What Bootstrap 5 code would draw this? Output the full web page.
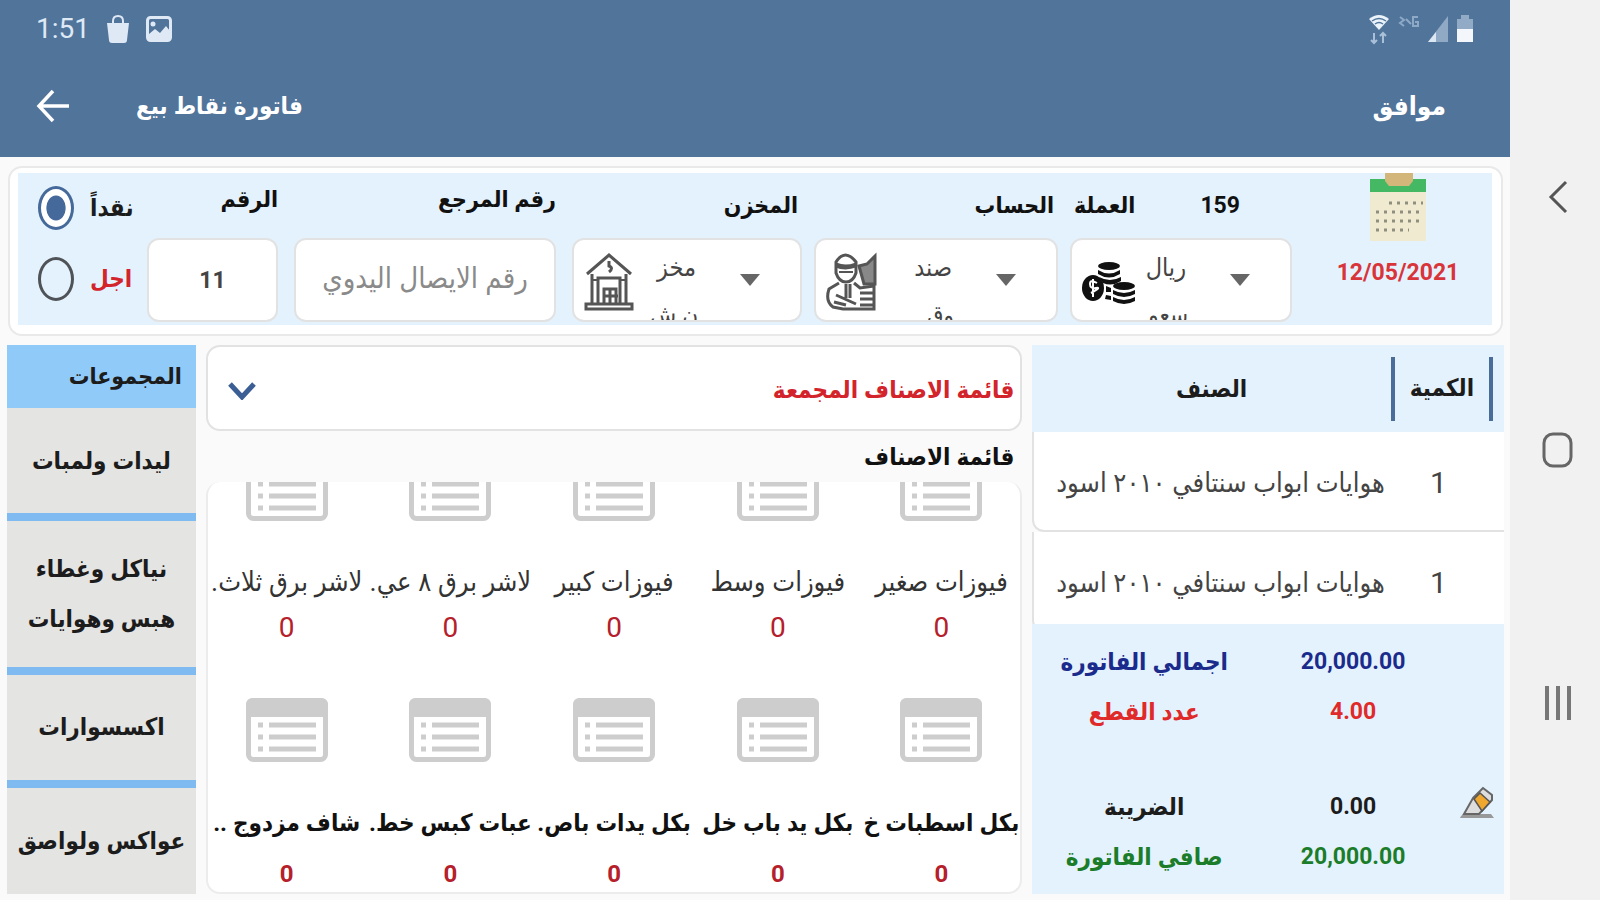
<!DOCTYPE html>
<html lang="ar">
<head>
<meta charset="utf-8">
<meta name="viewport" content="width=device-width, initial-scale=1">
<title>فاتورة نقاط بيع</title>
<link href="https://cdn.jsdelivr.net/npm/bootstrap@5.3.0/dist/css/bootstrap.min.css" rel="stylesheet">
<script src="https://cdn.jsdelivr.net/npm/bootstrap@5.3.0/dist/js/bootstrap.bundle.min.js"></script>
<style>
  :root { --bar:#51749b; --sky:#e3f2fd; --line:#e2e2e2; --ink:#1c1c1c; }
  body { font-family:Roboto,"DejaVu Sans Condensed","DejaVu Sans",sans-serif; font-size:24px; line-height:32px; color:var(--ink); background:#fafafa; }
  svg { display:block; flex:none; }
  .system-nav { width:90px; background:#f1f1f1; padding:180px 0 180px 6px; }
  .topbar { background:var(--bar); color:#fff; height:157px; flex:none; }
  .status { height:57px; padding:0 36px; color:#dfe9f5; }
  .clock { font-size:28px; }
  .actions { height:98px; padding:0 64px 0 36px; font-size:26px; }
  .plain { background:none; border:0; padding:0; color:inherit; }
  .title { font-size:24px; margin-left:66px; }
  .filters { margin:9px 7px 0 8px; border:2px solid #e9e9e9; border-radius:14px; background:#fff; padding:5px 9px 9px 8px; }
  .filter-grid { display:grid; grid-template-columns:117fr 131fr 266fr 234fr 244fr 222fr 188fr; column-gap:12px; background:var(--sky); height:152px; }
  .filter-grid > div { min-width:0; }
  .pay-list { padding:13px 0 0 20px; gap:27px; }
  .pay-due { color:#d3232b; }
  .cap { height:65px; font-weight:700; font-size:23px; color:#111; padding-bottom:12px; }
  .cap-low { padding-bottom:0; }
  .box { height:84px; border:2px solid var(--line); border-radius:12px; background:#fff; width:100%; color:#444; }
  .box::placeholder { color:#8a8a8a; opacity:1; font-size:29px; }
  .pick { position:relative; }
  .pick select { appearance:none; padding:0 104px 24px 0; text-align:right; direction:rtl; font-size:25px; }
  .pick .pic { position:absolute; left:12px; top:14px; pointer-events:none; }
  .pick .tri { position:absolute; right:42px; top:36px; pointer-events:none; }
  .pick .rest { position:absolute; right:104px; bottom:2px; height:18px; line-height:26px; overflow:hidden; pointer-events:none; color:#444; }
  input[type=radio] { appearance:none; width:36px; height:44px; border:3px solid #4f5357; border-radius:50%; margin:0; flex:none; }
  input[type=radio]:checked { border-color:#44699a; background:radial-gradient(ellipse 10px 13px,#44699a 92%,#fff 100%); }
  .work { display:grid; grid-template-columns:189fr 817fr 472fr; margin:9px 6px 6px 7px; min-height:0; column-gap:10px; }
  .group-head { height:63px; flex:none; background:#90caf9; padding-right:14px; font-size:23px; }
  .group-item { background:#e4e4e3; border:0; border-bottom:8px solid #7fbaf0; line-height:50px; font-size:24px; font-weight:700; color:var(--ink); width:100%; padding:0; }
  .combo { height:86px; flex:none; border:2px solid var(--line); border-radius:14px; background:#fff; padding:4px 6px 0 20px; color:#d3232b; font-weight:700; font-size:24px; width:100%; }
  .list-cap { height:51px; flex:none; padding-right:8px; padding-top:2px; font-size:24px; color:#111; }
  .goods { border:2px solid #ececec; border-top:0; border-radius:14px; background:#fff; overflow:hidden; min-height:0; }
  .goods-grid { display:grid; grid-template-columns:repeat(5,1fr); direction:rtl; margin:0 -3px; }
  .good { height:241px; min-width:0; display:flex; flex-direction:column; align-items:center; }
  .good .nm { margin-top:39px; width:100%; text-align:center; white-space:nowrap; overflow:hidden; height:44px; line-height:44px; color:#333; font-size:27px; }
  .good .zero { color:#b5202b; font-size:28px; margin-top:8px; }
  .good-b { height:194px; }
  .good-b .nm { font-weight:700; color:#111; font-size:24px; }
  .good-b .zero { font-weight:700; font-size:24px; margin-top:13px; }
  .lines { width:100%; direction:rtl; border-collapse:separate; border-spacing:0; table-layout:fixed; }
  .lines th { background:var(--sky); height:87px; text-align:center; font-size:24px; }
  .lines td { background:#fff; height:100px; border-bottom:2px solid var(--line); text-align:center; color:#444; padding:4px 0 0; white-space:nowrap; }
  .lines td:last-child { border-left:2px solid var(--line); border-radius:0 0 0 12px; text-align:right; font-size:27px; padding-right:6px; }
  .lines td:first-child { font-size:30px; padding-right:18px; }
  .q { display:block; margin:0 11px 0 0; border:solid #4a6c98; border-width:0 4px; height:64px; line-height:62px; }
  .lines-wrap { height:279px; flex:none; overflow:hidden; }
  .sums { background:var(--sky); font-weight:700; font-size:24px; padding-top:2px; }
  .sums dl { display:grid; grid-template-columns:224fr 194fr 54fr; text-align:center; align-items:center; margin:0; }
  .sums dd { margin:0; font-size:23px; }
  .num { font-family:Roboto,sans-serif; font-size:23px; }
</style>
</head>
<body>
<svg width="0" height="0" class="position-absolute" aria-hidden="true">
  <symbol id="card-icon" viewBox="0 0 82 64">
    <rect x="2.500" y="2.500" width="77" height="59" rx="5" fill="#fff" stroke="#cdcdcd" stroke-width="5"/>
    <path d="M0 19V7q0-7 7-7h68q7 0 7 7v12z" fill="#cdcdcd"/>
    <path d="M12 27h5M12 39h5M12 51h5M23 27h47M23 39h47M23 51h47" stroke="#cdcdcd" stroke-width="5"/>
  </symbol>
</svg>
<div class="d-flex vh-100 overflow-hidden">
  <div class="d-flex flex-column flex-grow-1 overflow-hidden">
    <header class="topbar">
      <div class="status d-flex align-items-center justify-content-between">
        <div class="d-flex align-items-center">
          <span class="clock">1:51</span>
          <svg class="ms-3" width="24" height="28" viewBox="0 0 24 28"><path d="M1 8h22l-2 17q0 3-3 3H6q-3 0-3-3z" fill="#dfe9f5"/><path d="M7 10V6q0-5 5-5t5 5v4" fill="none" stroke="#dfe9f5" stroke-width="2"/></svg>
          <svg class="ms-3" width="26" height="26" viewBox="0 0 26 26"><rect x="1.500" y="1.500" width="23" height="23" rx="3" fill="none" stroke="#dfe9f5" stroke-width="3"/><path d="M3 23V18l6-5 5 4 6-7 4 5v8z" fill="#dfe9f5"/><circle cx="7" cy="8" r="2.500" fill="#dfe9f5"/></svg>
        </div>
        <div class="d-flex align-items-center">
          <svg width="22" height="32" viewBox="0 0 22 32"><path d="M1 6q10-8 20 0L11 17z" fill="#eaf2fa"/><path d="M4 8q7-5 14 0M7 11q4-3 8 0" fill="none" stroke="#51749b" stroke-width="1.500"/><path d="M6 20v10M3 27l3 3 3-3M15 30V20M12 23l3-3 3 3" stroke="#a9c0d8" stroke-width="2" fill="none"/></svg>
          <svg class="ms-2" width="22" height="30" viewBox="0 0 22 30"><path d="M2 3l4 3-4 3 4 3M20 3h-5v9h5V8h-3M8 5l5 5" stroke="#8da9c6" stroke-width="2" fill="none"/></svg>
          <svg class="ms-2" width="20" height="26" viewBox="0 0 20 26"><path d="M0 26L20 0v26z" fill="#90aac5"/><path d="M0 26l8-10v10z" fill="#dbe7f3"/></svg>
          <svg class="ms-2" width="18" height="28" viewBox="0 0 18 28"><path d="M1 4h4V0h8v4h4v11H1z" fill="#91abc7"/><path d="M1 14h16v13H1z" fill="#f3f7fb"/></svg>
        </div>
      </div>
      <div class="actions d-flex align-items-center">
        <button class="plain" aria-label="رجوع"><svg width="34" height="34" viewBox="0 0 34 34"><path d="M17 2L3 17l14 15M4 17h29" fill="none" stroke="#fff" stroke-width="3.500"/></svg></button>
        <h1 class="title fw-bold mb-0" dir="rtl">فاتورة نقاط بيع</h1>
        <button class="plain fw-bold ms-auto" dir="rtl">موافق</button>
      </div>
    </header>

    <form class="filters">
      <div class="filter-grid">
        <div class="pay-list d-flex flex-column">
          <label class="d-flex align-items-center gap-3 fw-bold"><input type="radio" name="pay" checked><span dir="rtl">نقداً</span></label>
          <label class="pay-due d-flex align-items-center gap-3 fw-bold"><input type="radio" name="pay"><span dir="rtl">اجل</span></label>
        </div>
        <div>
          <label class="cap d-flex align-items-center justify-content-end" for="no">الرقم</label>
          <input id="no" class="box num text-center fw-bold" value="11">
        </div>
        <div class="ps-1">
          <label class="cap d-flex align-items-center justify-content-end" for="ref">رقم المرجع</label>
          <input id="ref" class="box text-center" dir="rtl" placeholder="رقم الايصال اليدوي">
        </div>
        <div class="ps-1">
          <label class="cap cap-low d-flex align-items-center justify-content-end pe-1" for="store">المخزن</label>
          <div class="pick"><select id="store" class="box"><option>مخز</option></select><span class="rest" dir="rtl">ن ش</span>
            <svg class="pic" width="50" height="60" viewBox="0 0 50 60" fill="none" stroke="#555" stroke-width="3"><path d="M3 22L25 3l22 19M8 22v30M42 22v30M14 52V26h22v26M25 9v5q5 2 0 6M20 51V37h12v14M20 44h14M26 37v14"/><path d="M2 52h46v5H2z"/><path d="M8 28h6M36 28h6" stroke-width="2"/></svg>
            <svg class="tri" width="20" height="12" viewBox="0 0 20 12"><path d="M0 0h20L10 12z" fill="#666"/></svg></div>
        </div>
        <div>
          <label class="cap cap-low d-flex align-items-center justify-content-end pe-1" for="acc">الحساب</label>
          <div class="pick"><select id="acc" class="box"><option>صند</option></select><span class="rest" dir="rtl">وق</span>
            <svg class="pic" width="52" height="60" viewBox="0 0 52 60" fill="none" stroke="#555" stroke-width="3"><path d="M10 21V10q9-14 20 0v11q-3 9-10 9t-10-9z"/><path d="M10 13q9 4 20 0" stroke-width="5"/><path d="M13 20h14" stroke-width="2"/><path d="M13 31L3 37q-4 12 4 18l10 2h31V34l-14 2-6-5"/><path d="M33 14l8-2 8-8v28H38z" fill="#888"/><path d="M20 32v14M24 32v14M10 43l20 9M8 50l12 3M34 41h14M34 47h14M34 53h14"/></svg>
            <svg class="tri" width="20" height="12" viewBox="0 0 20 12"><path d="M0 0h20L10 12z" fill="#666"/></svg></div>
        </div>
        <div>
          <div class="cap cap-low d-flex align-items-center justify-content-between ps-1"><label for="cur">العملة</label><span class="num me-5 pe-1">159</span></div>
          <div class="pick"><select id="cur" class="box"><option>ريال</option></select><span class="rest" dir="rtl">سعو</span>
            <svg class="pic" width="54" height="60" viewBox="0 0 54 60"><g fill="#111"><ellipse cx="27" cy="14" rx="11" ry="4"/><path d="M16 18q11 7 22 0v4q-11 7-22 0zM17 25q11 6 22 0v4q-9 6-18 2z"/><ellipse cx="42" cy="34" rx="11" ry="4"/><path d="M31 38q11 6 22 0v4q-11 6-22 0zM31 45q11 6 22 0v4q-11 6-22 0zM24 34l5 2v4h-5zM24 43l5 1v4l-6-1z"/><ellipse cx="11" cy="36" rx="11" ry="13"/></g><path d="M15 31q-7-4-7 1t6 4-5 5M11 27v18" stroke="#fff" stroke-width="2" fill="none"/></svg>
            <svg class="tri" width="20" height="12" viewBox="0 0 20 12"><path d="M0 0h20L10 12z" fill="#666"/></svg></div>
        </div>
        <div class="d-flex flex-column align-items-center">
          <svg width="58" height="68" viewBox="0 0 58 68"><path d="M1 6h56v62H1z" fill="#efead0"/><path d="M1 6h56v13H1z" fill="#45b864"/><path d="M16 0h28v8l-4 5H20l-4-5z" fill="#d3b77a"/><g stroke="#8f8f80" stroke-width="3" stroke-dasharray="3 5"><path d="M20 30h34M7 39h47M7 48h47M7 57h33"/></g></svg>
          <span class="num fw-bold pt-3" style="color:#d8343a">12/05/2021</span>
        </div>
      </div>
    </form>

    <main class="work flex-grow-1">
      <nav class="d-flex flex-column overflow-hidden" dir="rtl">
        <h2 class="group-head d-flex align-items-center fw-bold mb-0">المجموعات</h2>
        <button class="group-item" style="flex:105 0 0">ليدات ولمبات</button>
        <button class="group-item" style="flex:145 0 0">نياكل وغطاء<br>هبس وهوايات</button>
        <button class="group-item" style="flex:104 0 0">اكسسوارات</button>
        <button class="group-item border-0" style="flex:106 0 0">عواكس ولواصق</button>
      </nav>

      <section class="d-flex flex-column overflow-hidden">
        <button class="combo d-flex align-items-center justify-content-between"><svg width="28" height="20" viewBox="0 0 28 20"><path d="M2 4l12 13L26 4" fill="none" stroke="#3b5f94" stroke-width="5"/></svg><span dir="rtl">قائمة الاصناف المجمعة</span></button>
        <h2 class="list-cap d-flex align-items-center justify-content-end fw-bold mb-0">قائمة الاصناف</h2>
        <div class="goods flex-grow-1 d-flex flex-column justify-content-end">
          <div class="goods-grid">
            <div class="good"><svg width="82" height="64"><use href="#card-icon"/></svg><span class="nm">فيوزات صغير</span><span class="zero">0</span></div>
            <div class="good"><svg width="82" height="64"><use href="#card-icon"/></svg><span class="nm">فيوزات وسط</span><span class="zero">0</span></div>
            <div class="good"><svg width="82" height="64"><use href="#card-icon"/></svg><span class="nm">فيوزات كبير</span><span class="zero">0</span></div>
            <div class="good"><svg width="82" height="64"><use href="#card-icon"/></svg><span class="nm">لاشر برق ٨ عي.</span><span class="zero">0</span></div>
            <div class="good"><svg width="82" height="64"><use href="#card-icon"/></svg><span class="nm">لاشر برق ثلاث.</span><span class="zero">0</span></div>
            <div class="good good-b"><svg width="82" height="64"><use href="#card-icon"/></svg><span class="nm">بكل اسطبات خ</span><span class="zero">0</span></div>
            <div class="good good-b"><svg width="82" height="64"><use href="#card-icon"/></svg><span class="nm">بكل يد باب خل</span><span class="zero">0</span></div>
            <div class="good good-b"><svg width="82" height="64"><use href="#card-icon"/></svg><span class="nm">بكل يدات باص.</span><span class="zero">0</span></div>
            <div class="good good-b"><svg width="82" height="64"><use href="#card-icon"/></svg><span class="nm">عبات كبس خط.</span><span class="zero">0</span></div>
            <div class="good good-b"><svg width="82" height="64"><use href="#card-icon"/></svg><span class="nm">شاف مزدوج ..</span><span class="zero">0</span></div>
          </div>
        </div>
      </section>

      <section class="d-flex flex-column overflow-hidden">
        <div class="lines-wrap">
          <table class="lines">
            <colgroup><col style="width:24%"><col></colgroup>
            <thead><tr><th class="p-0"><span class="q">الكمية</span></th><th>الصنف</th></tr></thead>
            <tbody>
              <tr><td>1</td><td>هوايات ابواب سنتافي ٢٠١٠ اسود</td></tr>
              <tr><td>1</td><td>هوايات ابواب سنتافي ٢٠١٠ اسود</td></tr>
            </tbody>
          </table>
        </div>
        <div class="sums flex-grow-1">
          <dl style="grid-template-rows:72px 28px">
            <dt style="color:#1b2b8c">اجمالي الفاتورة</dt><dd style="color:#1b2b8c">20,000.00</dd><dd></dd>
            <dt style="color:#e02a2a">عدد القطع</dt><dd style="color:#e02a2a">4.00</dd><dd></dd>
          </dl>
          <dl style="grid-template-rows:72px 28px;margin-top:45px">
            <dt>الضريبة</dt><dd>0.00</dd>
            <dd><button class="plain" type="button" aria-label="تعديل"><svg width="36" height="34" viewBox="0 0 36 34"><path d="M1 32q2-5 9-4h22l3 4z" fill="#999"/><path d="M14 12l10-10 9 7v5L20 28H5z" fill="#ddd" stroke="#666" stroke-width="2"/><path d="M15 13l6-6 10 9-8 9z" fill="#f0a72d" stroke="#555" stroke-width="1.500"/></svg></button></dd>
            <dt style="color:#1b7d2a">صافي الفاتورة</dt><dd style="color:#1b7d2a">20,000.00</dd>
          </dl>
        </div>
      </section>
    </main>
  </div>
  <nav class="system-nav d-flex flex-column align-items-center justify-content-between flex-shrink-0">
    <button class="plain" aria-label="السابق"><svg width="20" height="34" viewBox="0 0 20 34"><path d="M18 2L3 17l15 15" fill="none" stroke="#555" stroke-width="3"/></svg></button>
    <button class="plain" aria-label="الرئيسية"><svg width="32" height="36" viewBox="0 0 32 36"><rect x="2" y="2" width="27" height="32" rx="9" fill="none" stroke="#666" stroke-width="3"/></svg></button>
    <button class="plain" aria-label="التطبيقات"><svg width="28" height="34" viewBox="0 0 28 34"><path d="M3 0v34M14 0v34M25 0v34" stroke="#777" stroke-width="4"/></svg></button>
  </nav>
</div>
</body>
</html>
